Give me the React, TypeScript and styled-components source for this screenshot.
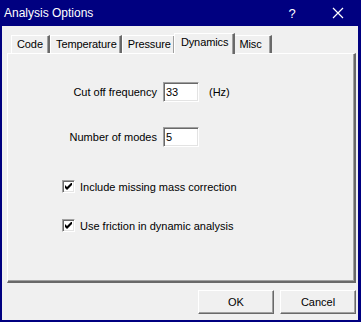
import React, {useState} from 'react'
import styled, {createGlobalStyle} from 'styled-components'

const GlobalStyle = createGlobalStyle`
  body {
    margin: 0;
    background: #f0f0f0;
    font-family: "Liberation Sans", Arial, sans-serif;
  }
`

const Window = styled.div`
  width: 361px;
  height: 322px;
  box-sizing: border-box;
  border-style: solid;
  border-color: #000080;
  border-width: 0 3px 2px 2px;
  background: #f0f0f0;

  display: flex;
  flex-direction: column;
`

const TitleBar = styled.div`
  height: 26px;
  margin: 0 -3px 0 -2px;
  padding-left: 4px;
  background: #000080;
  color: #fff;
  font-size: 12px;

  display: flex;
  align-items: center;
`

const TitleText = styled.span`
  flex-grow: 1;
`

const TitleButton = styled.span`
  width: 46px;
  display: flex;
  justify-content: center;
  font-size: 13px;
`

const Body = styled.div`
  flex-grow: 1;
  padding: 7px 2px 6px 5px;

  display: flex;
  flex-direction: column;
`

const TabStrip = styled.div`
  height: 20px;
  padding-left: 4px;

  display: flex;
  flex-direction: row;
  align-items: flex-end;
`

const Tab = styled.div<{$active?: boolean}>`
  box-sizing: border-box;
  min-width: 39px;
  height: ${p => p.$active ? 21 : 18}px;
  padding: ${p => p.$active ? '2px 5px 0 6px' : '2px 3px 0 5px'};
  margin: ${p => p.$active ? '0 -2px -1px -2px' : '0'};
  position: relative;
  z-index: ${p => p.$active ? 1 : 0};
  font-size: 11px;
  letter-spacing: -0.1px;
  color: #000;
  background: #f0f0f0;
  border-style: solid;
  border-width: 1px 2px 0 1px;
  border-color: #fff #696969 transparent #fff;
  box-shadow: inset -1px 0 0 #a0a0a0;
`

const Panel = styled.div`
  flex-grow: 1;
  box-sizing: border-box;
  border-style: solid;
  border-width: 1px 2px 2px 1px;
  border-color: #fff #696969 #696969 #fff;
  box-shadow: inset -1px -1px 0 #a0a0a0;

  display: flex;
  flex-direction: column;
  font-size: 11px;
`

const Fields = styled.div`
  padding-top: 28px;

  display: flex;
  flex-direction: column;
  gap: 25px;
`

const FieldRow = styled.div`
  display: flex;
  flex-direction: row;
  align-items: center;
`

const FieldLabel = styled.label`
  width: 149px;
  text-align: right;
  margin-right: 6px;
`

const TextBox = styled.input`
  width: 36px;
  height: 20px;
  box-sizing: border-box;
  padding: 0 2px;
  font: inherit;
  font-size: 11px;
  background: #fff;
  border: 1px solid;
  border-color: #a0a0a0 #fff #fff #a0a0a0;
  box-shadow: inset 1px 1px 0 #696969, inset -1px -1px 0 #e3e3e3;
  outline: none;
`

const Unit = styled.span`
  margin-left: 10px;
`

const Checks = styled.div`
  padding: 33px 0 0 54px;

  display: flex;
  flex-direction: column;
  gap: 26px;
`

const CheckRow = styled.label`
  display: flex;
  flex-direction: row;
  align-items: center;
  gap: 5px;
`

const CheckBox = styled.span`
  width: 13px;
  height: 13px;
  box-sizing: border-box;
  background: #fff;
  border: 1px solid;
  border-color: #a0a0a0 #fff #fff #a0a0a0;
  box-shadow: inset 1px 1px 0 #696969, inset -1px -1px 0 #e3e3e3;

  display: flex;
  align-items: center;
  justify-content: center;
`

const Footer = styled.div`
  padding-top: 7px;

  display: flex;
  flex-direction: row;
  justify-content: flex-end;
  gap: 6px;
`

const Button = styled.button`
  width: 76px;
  height: 24px;
  box-sizing: border-box;
  font-family: inherit;
  font-size: 11px;
  color: #000;
  background: #f0f0f0;
  border: 1px solid;
  border-color: #fff #696969 #696969 #fff;
  box-shadow: inset -1px -1px 0 #a0a0a0;
  padding: 0;
`

const Check = () => (
  <svg width="7" height="7" viewBox="0 0 7 7">
    <path d="M0 2v3l2 2 5-5V-1L2 4z" fill="#000"/>
  </svg>
)

const CloseIcon = () => (
  <svg width="12" height="12" viewBox="0 0 12 12">
    <path d="M1 1L11 11M11 1L1 11" stroke="#fff" strokeWidth="1.2"/>
  </svg>
)

function App() {
  const [cutOff, setCutOff] = useState('33')
  const [modes, setModes] = useState('5')

  return (
    <>
      <GlobalStyle/>
      <Window>
        <TitleBar>
          <TitleText>Analysis Options</TitleText>
          <TitleButton>?</TitleButton>
          <TitleButton><CloseIcon/></TitleButton>
        </TitleBar>
        <Body>
          <TabStrip>
            <Tab>Code</Tab>
            <Tab>Temperature</Tab>
            <Tab>Pressure</Tab>
            <Tab $active>Dynamics</Tab>
            <Tab>Misc</Tab>
          </TabStrip>
          <Panel>
            <Fields>
              <FieldRow>
                <FieldLabel>Cut off frequency</FieldLabel>
                <TextBox value={cutOff} onChange={e => setCutOff(e.target.value)}/>
                <Unit>(Hz)</Unit>
              </FieldRow>
              <FieldRow>
                <FieldLabel>Number of modes</FieldLabel>
                <TextBox value={modes} onChange={e => setModes(e.target.value)}/>
              </FieldRow>
            </Fields>
            <Checks>
              <CheckRow><CheckBox><Check/></CheckBox>Include missing mass correction</CheckRow>
              <CheckRow><CheckBox><Check/></CheckBox>Use friction in dynamic analysis</CheckRow>
            </Checks>
          </Panel>
          <Footer>
            <Button>OK</Button>
            <Button>Cancel</Button>
          </Footer>
        </Body>
      </Window>
    </>
  )
}

export default App
